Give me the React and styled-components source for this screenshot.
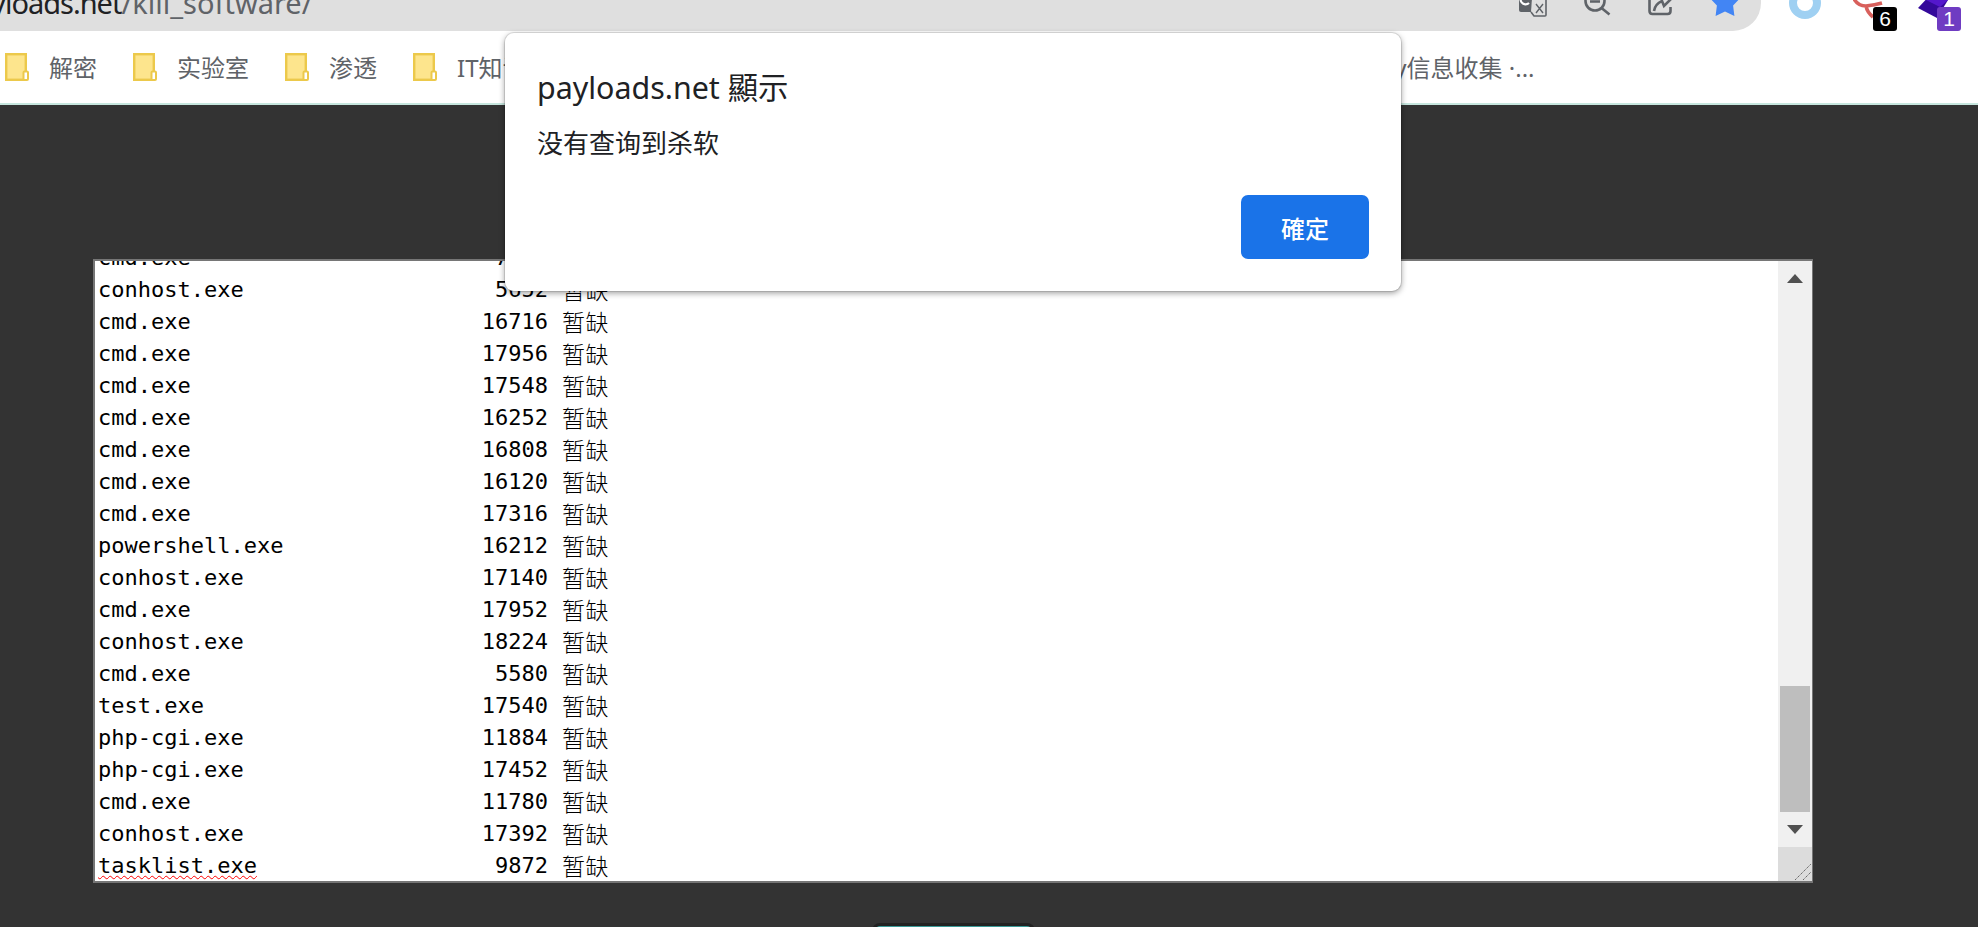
import React from "react";
import styled, { createGlobalStyle } from "styled-components";

const CJK = '"Noto Sans", "Noto Sans CJK SC", sans-serif';
const Global = createGlobalStyle`
  html, body { margin: 0; padding: 0; height: 100%; overflow: hidden; background: #333; }
  #root { height: 100%; }
`;
const Page = styled.div`position: relative; display: flex; flex-direction: column; width: 1978px; height: 927px; overflow: hidden; background: #333; font-family: ${CJK};`;
const TopBar = styled.div`display: flex; height: 31px; flex: none; background: #fff; overflow: hidden;`;
const AddressBar = styled.div`display: flex; width: 1761px; height: 31px; padding-right: 20px; box-sizing: border-box; gap: 37px; background: #dfdfdf; border-bottom-right-radius: 28px; overflow: hidden;`;
const Url = styled.div`flex: 1; margin: -16px 0 0 -41px; font-size: 29px; line-height: 38px; white-space: nowrap; color: #5f6368;`;
const Host = styled.span`color: #202124; letter-spacing: -1px;`;
const Icon = styled.svg`display: block; flex: none; height: 31px; overflow: hidden;`;
const Extensions = styled.div`display: flex; flex: 1; padding-left: 28px;`;
const Extension = styled.div`position: relative; flex: none; width: ${p => p.$width}px; height: 31px; margin-left: ${p => p.$gap || 0}px;`;
const Badge = styled.span`position: absolute; right: 0; bottom: 0; width: 24px; height: 24px; border-radius: 3px; background: ${p => p.$color}; color: #fff; font: 21px/24px "Liberation Sans", sans-serif; text-align: center;`;
const BookmarkBar = styled.div`display: flex; align-items: center; gap: 36px; flex: none; height: 72px; padding-left: 5px; background: #fff; border-bottom: 2px solid #c6e6de; overflow: hidden; white-space: nowrap;`;
const Bookmark = styled.div`display: flex; align-items: center; gap: 20px; flex: none; margin-left: ${p => p.$offset || 0}px; font-size: 24px; line-height: 28px; color: #5f6368;`;
const BookmarkLabel = styled.span`padding-top: 2px;`;
const Main = styled.main`display: flex; flex-direction: column; align-items: center; width: 1720px; margin-left: 93px; padding-top: 154px;`;
const TextBox = styled.div`display: flex; flex: none; width: 1720px; height: 624px; box-sizing: border-box; background: #fff; border: 2px solid #767676; border-right-width: 1px;`;
const Lines = styled.div`display: flex; flex-direction: column; justify-content: flex-end; flex: 1; min-width: 0; padding-left: 3px; overflow: hidden;`;
const Line = styled.div`display: grid; grid-template-columns: 318px 118px auto; column-gap: 14px; flex: none; height: 32px; box-sizing: border-box; padding-top: 1px; font: 22px/32px "DejaVu Sans Mono", monospace; color: #000;`;
const ProcessName = styled.span`justify-self: start; ${p => p.$misspelled && "text-decoration: underline wavy #f00 1px; text-underline-offset: 2px; text-decoration-skip-ink: none;"}`;
const Pid = styled.span`text-align: right;`;
const Memo = styled.span`margin-top: -1px; font-family: "Noto Sans CJK SC", sans-serif; font-size: 23px; font-weight: 300; letter-spacing: 0.5px;`;
const ScrollBar = styled.div`display: flex; flex-direction: column; flex: none; width: 34px; background: #f0f0f0;`;
const ArrowButton = styled.div`display: flex; align-items: center; justify-content: center; flex: none; height: ${p => p.$height}px;`;
const ScrollSpace = styled.div`flex: 1;`;
const Thumb = styled.div`flex: none; height: 126px; margin: 0 2px; background: #bebebe;`;
const Resizer = styled.div`display: flex; align-items: flex-end; justify-content: flex-end; flex: none; height: 34px; background: #dcdcdc;`;
const SubmitEdge = styled.div`flex: none; width: 163px; height: 50px; box-sizing: border-box; margin-top: 40px; background: #3b9a98; border: 3px solid #222; border-radius: 8px;`;
const Dialog = styled.div`position: absolute; left: 505px; top: 33px; display: flex; flex-direction: column; width: 896px; height: 258px; box-sizing: border-box; padding: 33px 32px 32px; background: #fff; border-radius: 9px; box-shadow: 0 0 0 1px rgba(0,0,0,.1), 0 2px 6px rgba(0,0,0,.4);`;
const DialogTitle = styled.div`font-size: 30.4px; line-height: 44px; color: #202124;`;
const DialogText = styled.div`margin-top: 15px; font-size: 26px; line-height: 36px; color: #202124;`;
const DialogActions = styled.div`display: flex; justify-content: flex-end; margin-top: auto;`;
const OkButton = styled.button`width: 128px; height: 64px; padding: 0; border: 0; border-radius: 7px; background: #1a73e8; color: #fff; font-family: ${CJK}; font-size: 24px; font-weight: 500;`;

const Folder = () => (
  <svg width="24" height="28" viewBox="0 0 24 28">
    <rect x="1.2" y="1.2" width="19.6" height="25.6" fill="#fde58d" stroke="#ecc94b" strokeWidth="2.4" />
    <rect x="18.5" y="18.5" width="4.5" height="8.5" rx="1" fill="#fff" stroke="#ecc94b" strokeWidth="2" />
  </svg>
);

const rows = [
  ["cmd.exe", "7316"], ["conhost.exe", "5652"], ["cmd.exe", "16716"], ["cmd.exe", "17956"], ["cmd.exe", "17548"],
  ["cmd.exe", "16252"], ["cmd.exe", "16808"], ["cmd.exe", "16120"], ["cmd.exe", "17316"], ["powershell.exe", "16212"],
  ["conhost.exe", "17140"], ["cmd.exe", "17952"], ["conhost.exe", "18224"], ["cmd.exe", "5580"], ["test.exe", "17540"],
  ["php-cgi.exe", "11884"], ["php-cgi.exe", "17452"], ["cmd.exe", "11780"], ["conhost.exe", "17392"], ["tasklist.exe", "9872"],
];

export default function App() {
  return (
    <Page>
      <Global />
      <TopBar>
        <AddressBar>
          <Url><Host>payloads.net</Host>/kill_software/</Url>
          <Icon width="28" viewBox="0 0 28 31">
            <path d="M0 -4H20V12H2Q0 12 0 10Z" fill="#5f6368" />
            <path d="M10 3a5 5 0 1 1 1 -6" fill="none" stroke="#fff" strokeWidth="2.2" />
            <path d="M13 -2H26Q27 -2 27 -1V15Q27 16 26 16H15L12 12" fill="#dfdfdf" stroke="#5f6368" strokeWidth="1.6" />
            <path d="M17 4L24 13M24 4L17 13" stroke="#5f6368" strokeWidth="1.4" />
          </Icon>
          <Icon width="27" viewBox="0 0 27 31">
            <circle cx="11" cy="1" r="9.5" fill="none" stroke="#5f6368" strokeWidth="2.6" />
            <path d="M17.5 8L25.5 14.5M6 1.5H16" stroke="#5f6368" strokeWidth="2.6" fill="none" />
          </Icon>
          <Icon width="24" viewBox="0 0 24 31">
            <path d="M1.5 -2V11Q1.5 14 4.5 14H19.5Q22.5 14 22.5 11V7" fill="none" stroke="#5f6368" strokeWidth="2.6" />
            <path d="M6 11Q7 4 14 1L16 6L25 -3" fill="none" stroke="#5f6368" strokeWidth="2.6" />
          </Icon>
          <Icon width="32" viewBox="0 0 32 31">
            <polygon points="16,-13 21,-3.9 31.2,-2 24.1,5.6 25.4,16 16,11.5 6.6,16 7.9,5.6 0.8,-2 11,-3.9" fill="#4285f4" />
          </Icon>
        </AddressBar>
        <Extensions>
          <Extension $width={32}>
            <Icon width="32" viewBox="0 0 32 31"><circle cx="16" cy="3" r="12" fill="none" stroke="#9fd0f2" strokeWidth="8" /></Icon>
          </Extension>
          <Extension $width={44} $gap={32}>
            <Icon width="44" viewBox="0 0 44 31">
              <path d="M1 -1Q5 6 13 6Q22 5 29 3M13 6Q14 12 20 17" fill="none" stroke="#d8605c" strokeWidth="3.6" />
            </Icon>
            <Badge $color="#000">6</Badge>
          </Extension>
          <Extension $width={43} $gap={21}>
            <Icon width="43" viewBox="0 0 43 31">
              <polygon points="0,8 15,-8 30,0 19,18" fill="#34099a" />
              <polygon points="8,0 15,-8 30,0 22,7" fill="#5417cc" />
            </Icon>
            <Badge $color="#6f3cc2">1</Badge>
          </Extension>
        </Extensions>
      </TopBar>
      <BookmarkBar>
        <Bookmark><Folder /><BookmarkLabel>解密</BookmarkLabel></Bookmark>
        <Bookmark><Folder /><BookmarkLabel>实验室</BookmarkLabel></Bookmark>
        <Bookmark><Folder /><BookmarkLabel>渗透</BookmarkLabel></Bookmark>
        <Bookmark><Folder /><BookmarkLabel>IT知识库</BookmarkLabel></Bookmark>
        <Bookmark $offset={686}><Folder /><BookmarkLabel>Security信息收集 ·...</BookmarkLabel></Bookmark>
      </BookmarkBar>
      <Main>
        <TextBox>
          <Lines>
            {rows.map(([name, pid], i) => (
              <Line key={i}>
                <ProcessName $misspelled={name === "tasklist.exe"}>{name}</ProcessName>
                <Pid>{pid}</Pid>
                <Memo>暂缺</Memo>
              </Line>
            ))}
          </Lines>
          <ScrollBar>
            <ArrowButton $height={34}>
              <svg width="16" height="9" viewBox="0 0 16 9"><polygon points="8,0 16,9 0,9" fill="#505050" /></svg>
            </ArrowButton>
            <ScrollSpace />
            <Thumb />
            <ArrowButton $height={35}>
              <svg width="16" height="9" viewBox="0 0 16 9"><polygon points="0,0 16,0 8,9" fill="#505050" /></svg>
            </ArrowButton>
            <Resizer>
              <svg width="18" height="18" viewBox="0 0 18 18">
                <path d="M1 17L17 1M9 17L17 9" stroke="#666" strokeWidth="1" strokeDasharray="1.4 0.7" />
              </svg>
            </Resizer>
          </ScrollBar>
        </TextBox>
        <SubmitEdge />
      </Main>
      <Dialog>
        <DialogTitle>payloads.net 顯示</DialogTitle>
        <DialogText>没有查询到杀软</DialogText>
        <DialogActions><OkButton>確定</OkButton></DialogActions>
      </Dialog>
    </Page>
  );
}
